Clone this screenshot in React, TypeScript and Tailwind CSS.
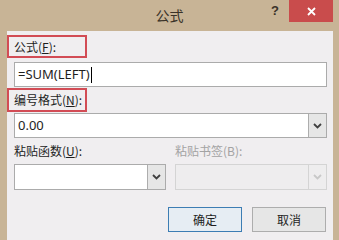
import React from 'react';

const cjk = { fontFamily: '"Noto Sans CJK SC", "Noto Sans", sans-serif' };

const Chevron: React.FC<{ color?: string }> = ({ color = '#404040' }) => (
  <svg width="9" height="6" viewBox="0 0 9 6">
    <path d="M1 1 L4.5 4.5 L8 1" fill="none" stroke={color} strokeWidth="1.8" />
  </svg>
);

const Select: React.FC<{ value?: string; height: string; disabled?: boolean }> = ({ value, height, disabled }) => (
  <div
    className={`flex border ${height} ${disabled ? 'border-[#d4d4d4] bg-[#eeedee]' : 'border-[#ababab] bg-white'}`}
  >
    <div className="flex-1 flex items-center pl-[3px] text-[13px] text-[#1e1e1e]" style={{ fontFamily: '"Noto Sans", sans-serif' }}>
      {value}
    </div>
    <div
      className={`w-[18px] flex items-center justify-center border-l ${
        disabled ? 'border-[#d4d4d4] bg-[#eeedee]' : 'border-[#adadad] bg-[#e6e6e6]'
      }`}
    >
      <Chevron color={disabled ? '#c8c8c8' : '#404040'} />
    </div>
  </div>
);

export default function App() {
  return (
    <div className="w-[339px] h-[240px] bg-[#c8b496] flex flex-col overflow-hidden" style={cjk}>
      <div className="h-[31px] flex items-start">
        <div className="flex-1" />
        <div className="h-[31px] flex items-center text-[14px] text-[#3a3228]">公式</div>
        <div className="flex-1 flex justify-end items-start">
          <div className="w-[14px] h-[22px] mr-[7px] flex items-center justify-center text-[13px] font-bold text-[#3a3228]" style={{ fontFamily: '"Liberation Sans", sans-serif' }}>
            ?
          </div>
          <div className="w-[44px] h-[22px] mr-[6px] bg-[#c94c4c] flex items-center justify-center">
            <svg width="9" height="9" viewBox="0 0 9 9">
              <path d="M1 1 L8 8 M8 1 L1 8" stroke="#ffffff" strokeWidth="1.8" />
            </svg>
          </div>
        </div>
      </div>

      <div className="flex-1 ml-[7px] mr-[6px] bg-[#f0eef0] flex flex-col pt-[4px] text-[12px] text-[#1e1e1e]">
        <div className="w-[80px] h-[23px] border-2 border-[#d24c55] flex items-center pl-[5px]">
          公式(<span className="underline">F</span>):
        </div>
        <div
          className="mt-[4px] ml-[7px] mr-[6px] h-[25px] border border-[#ababab] bg-white flex items-center pl-[3px] text-[13px]"
          style={{ fontFamily: '"Noto Sans", sans-serif' }}
        >
          =SUM(LEFT)<span className="inline-block w-px h-[16px] bg-black ml-[1px]" />
        </div>
        <div className="mt-[1px] w-[80px] h-[24px] border-2 border-[#d24c55] flex items-center pl-[5px]">
          编号格式(<span className="underline">N</span>):
        </div>
        <div className="mt-[1px] ml-[7px] mr-[6px]">
          <Select value="0.00" height="h-[25px]" />
        </div>

        <div className="mt-[4px] ml-[7px] mr-[6px] grid grid-cols-2 gap-[9px]">
          <div className="flex flex-col">
            <div className="h-[18px] flex items-center">
              粘贴函数(<span className="underline">U</span>):
            </div>
            <div className="mt-[4px]">
              <Select height="h-[26px]" />
            </div>
          </div>
          <div className="flex flex-col">
            <div className="h-[18px] flex items-center text-[#a3a3a3]">粘贴书签(B):</div>
            <div className="mt-[4px]">
              <Select height="h-[26px]" disabled />
            </div>
          </div>
        </div>

        <div className="mt-[17px] mr-[7px] flex justify-end gap-[10px]">
          <button className="w-[74px] h-[25px] border border-[#3d7db3] bg-[#e6edf3] text-[12px] flex items-center justify-center">
            确定
          </button>
          <button className="w-[74px] h-[25px] border border-[#adadad] bg-[#e6e6e6] text-[12px] flex items-center justify-center">
            取消
          </button>
        </div>
      </div>
    </div>
  );
}
